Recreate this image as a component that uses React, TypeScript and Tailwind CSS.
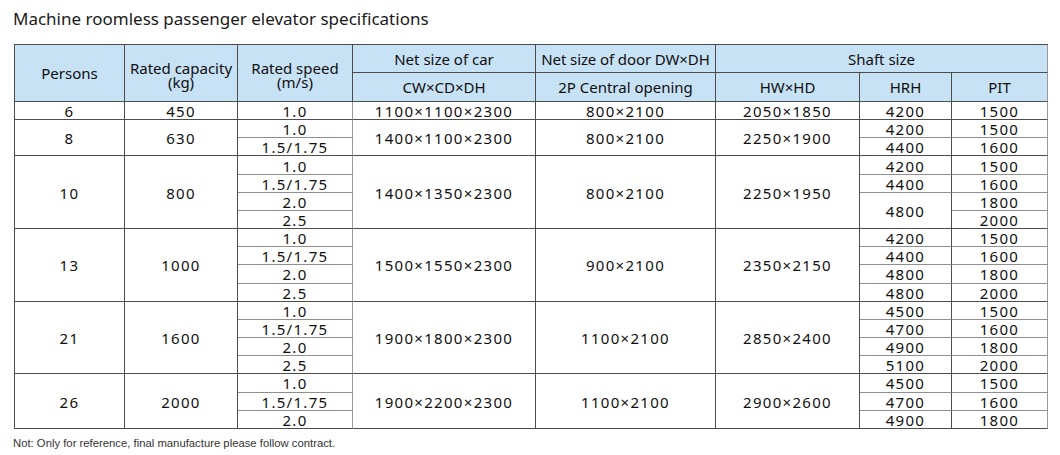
const DARK = 'border-[#4d4d4d]';

type Cell = { t: string; rs?: number; sub?: boolean };

// one entry per data row; sub marks a light inner line below the cell
const rows: Cell[][] = [
  [{ t: '6' }, { t: '450' }, { t: '1.0' }, { t: '1100×1100×2300' }, { t: '800×2100' }, { t: '2050×1850' }, { t: '4200' }, { t: '1500' }],
  [{ t: '8', rs: 2 }, { t: '630', rs: 2 }, { t: '1.0', sub: true }, { t: '1400×1100×2300', rs: 2 }, { t: '800×2100', rs: 2 }, { t: '2250×1900', rs: 2 }, { t: '4200', sub: true }, { t: '1500', sub: true }],
  [{ t: '1.5/1.75' }, { t: '4400' }, { t: '1600' }],
  [{ t: '10', rs: 4 }, { t: '800', rs: 4 }, { t: '1.0', sub: true }, { t: '1400×1350×2300', rs: 4 }, { t: '800×2100', rs: 4 }, { t: '2250×1950', rs: 4 }, { t: '4200', sub: true }, { t: '1500', sub: true }],
  [{ t: '1.5/1.75', sub: true }, { t: '4400', sub: true }, { t: '1600', sub: true }],
  [{ t: '2.0', sub: true }, { t: '4800', rs: 2 }, { t: '1800', sub: true }],
  [{ t: '2.5' }, { t: '2000' }],
  [{ t: '13', rs: 4 }, { t: '1000', rs: 4 }, { t: '1.0', sub: true }, { t: '1500×1550×2300', rs: 4 }, { t: '900×2100', rs: 4 }, { t: '2350×2150', rs: 4 }, { t: '4200', sub: true }, { t: '1500', sub: true }],
  [{ t: '1.5/1.75', sub: true }, { t: '4400', sub: true }, { t: '1600', sub: true }],
  [{ t: '2.0', sub: true }, { t: '4800', sub: true }, { t: '1800', sub: true }],
  [{ t: '2.5' }, { t: '4800' }, { t: '2000' }],
  [{ t: '21', rs: 4 }, { t: '1600', rs: 4 }, { t: '1.0', sub: true }, { t: '1900×1800×2300', rs: 4 }, { t: '1100×2100', rs: 4 }, { t: '2850×2400', rs: 4 }, { t: '4500', sub: true }, { t: '1500', sub: true }],
  [{ t: '1.5/1.75', sub: true }, { t: '4700', sub: true }, { t: '1600', sub: true }],
  [{ t: '2.0', sub: true }, { t: '4900', sub: true }, { t: '1800', sub: true }],
  [{ t: '2.5' }, { t: '5100' }, { t: '2000' }],
  [{ t: '26', rs: 3 }, { t: '2000', rs: 3 }, { t: '1.0', sub: true }, { t: '1900×2200×2300', rs: 3 }, { t: '1100×2100', rs: 3 }, { t: '2900×2600', rs: 3 }, { t: '4500', sub: true }, { t: '1500', sub: true }],
  [{ t: '1.5/1.75', sub: true }, { t: '4700', sub: true }, { t: '1600', sub: true }],
  [{ t: '2.0' }, { t: '4900' }, { t: '1800' }],
];

// which column each cell of a row sits in
function columnOf(len: number, j: number) {
  if (len === 8) return j;
  if (len === 2) return j === 0 ? 2 : 7;
  return j === 0 ? 2 : 8 - (len - j);
}

const head = 'bg-[#c7e1f5] border-r border-b border-[#4d4d4d] font-normal text-center align-middle';

export default function App() {
  return (
    <div className="w-[1060px] h-[455px] bg-white text-[#0f0f0f] font-['Noto_Sans',sans-serif] pl-[14px] overflow-hidden">
      <div className="h-[44px] pt-[7px] -ml-[1px] text-[17px] leading-[24px] text-[#1a1a1a]">
        Machine roomless passenger elevator specifications
      </div>

      <table className={`border-separate border-spacing-0 border-l border-t ${DARK} w-[1033px] table-fixed`}>
        <colgroup>
          <col className="w-[110px]" />
          <col className="w-[113px]" />
          <col className="w-[115px]" />
          <col className="w-[183px]" />
          <col className="w-[180px]" />
          <col className="w-[144px]" />
          <col className="w-[92px]" />
          <col className="w-[96px]" />
        </colgroup>
        <thead className="text-[15px]">
          <tr className="h-[28px]">
            <th rowSpan={2} className={head}>Persons</th>
            <th rowSpan={2} className={`${head} leading-[14px] pt-[4px]`}>
              Rated capacity
              <br />
              (kg)
            </th>
            <th rowSpan={2} className={`${head} leading-[14px] pt-[4px]`}>
              Rated speed
              <br />
              (m/s)
            </th>
            <th className={`${head} leading-[16px]`}>Net size of car</th>
            <th className={`${head} leading-[16px] whitespace-nowrap tracking-[-0.1px]`}>Net size of door DW×DH</th>
            <th colSpan={3} className={`${head} leading-[16px] border-r-[#9a9a9a]`}>Shaft size</th>
          </tr>
          <tr className="h-[29px]">
            <th className={`${head} leading-[16px]`}>CW×CD×DH</th>
            <th className={`${head} leading-[16px]`}>2P Central opening</th>
            <th className={`${head} leading-[16px]`}>HW×HD</th>
            <th className={`${head} leading-[16px]`}>HRH</th>
            <th className={`${head} leading-[16px] border-r-[#9a9a9a]`}>PIT</th>
          </tr>
        </thead>
        <tbody className="text-[15px] tracking-[1.3px]">
          {rows.map((row, i) => (
            <tr key={i} className="h-[18.17px]">
              {row.map((c, j) => {
                const col = columnOf(row.length, j);
                const bottom = c.sub ? 'border-b-[#8f8f8f]' : 'border-b-[#4d4d4d]';
                const right = col === 2 || col === 7 ? 'border-r-[#9a9a9a]' : 'border-r-[#4d4d4d]';
                return (
                  <td
                    key={j}
                    rowSpan={c.rs}
                    className={`border-r border-b ${right} ${bottom} text-center align-middle leading-[16px] pt-[1px] whitespace-nowrap`}
                  >
                    {c.t}
                  </td>
                );
              })}
            </tr>
          ))}
        </tbody>
      </table>

      <div className="pt-[7px] -ml-[1px] text-[11.3px] leading-[14px] text-[#333] font-['Liberation_Sans',Arial,sans-serif]">
        Not: Only for reference, final manufacture please follow contract.
      </div>
    </div>
  );
}
